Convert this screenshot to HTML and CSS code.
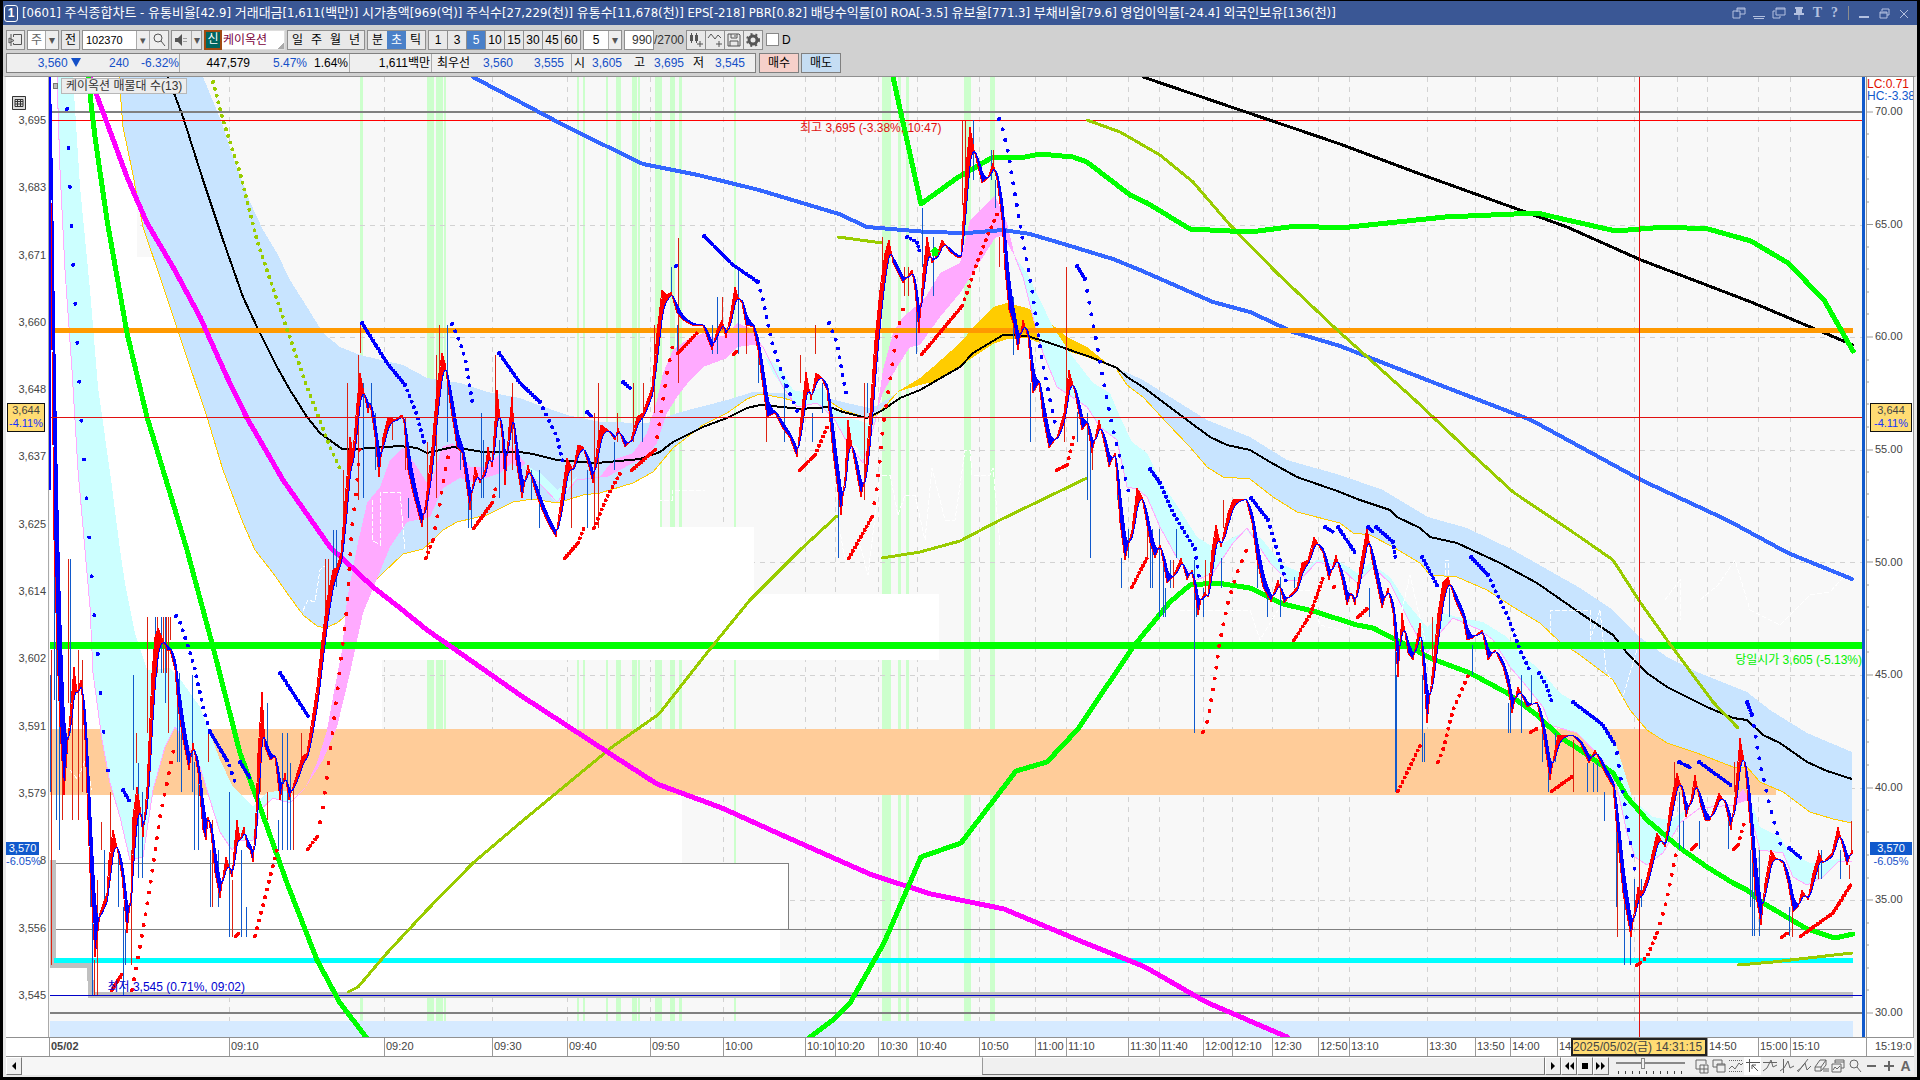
FILE: index.html
```html
<!DOCTYPE html>
<html lang="ko">
<head>
<meta charset="utf-8">
<title>[0601] 주식종합차트</title>
<link rel="stylesheet" href="styles.css">
</head>
<body>
<main class="window">
  <header class="titlebar">
    <span class="badge">1</span>
    <h1>[0601] 주식종합차트 - 유통비율[42.9] 거래대금[1,611(백만)] 시가총액[969(억)] 주식수[27,229(천)] 유통수[11,678(천)] EPS[-218] PBR[0.82] 배당수익률[0] ROA[-3.5] 유보율[771.3] 부채비율[79.6] 영업이익률[-24.4] 외국인보유[136(천)]</h1>
    <div class="win-tools">
      <button aria-label="창 연결"><svg viewBox="0 0 14 14"><path d="M5 6V2h8v6H8M1 5h7v7H1zM5 3h8"/></svg></button>
      <button aria-label="접기"><svg viewBox="0 0 14 14"><path d="M1 10.500h12M2 12.500h10"/></svg></button>
      <button aria-label="새 창"><svg viewBox="0 0 14 14"><path d="M4 2h9v7H4zM4 3h9M3 5H1v7h7v-2"/></svg></button>
      <button aria-label="고정"><svg viewBox="0 0 14 14"><path class="solid" d="M3 1h8v2h-1v4h2v2H2V7h2V3H3z"/><path d="M7 9v5"/></svg></button>
      <button class="serif" aria-label="글꼴">T</button>
      <button class="serif" aria-label="도움말">?</button>
      <i></i>
      <button aria-label="최소화"><svg viewBox="0 0 14 14"><path class="solid" d="M2 10h10v2H2z"/></svg></button>
      <button aria-label="이전 크기"><svg viewBox="0 0 14 14"><path d="M5 5V3h7v6h-2M3 6h7v6H3zM3 7h7"/></svg></button>
      <button aria-label="닫기"><svg viewBox="0 0 14 14"><path d="M3 4l8 8M11 4l-8 8"/></svg></button>
    </div>
  </header>

  <div class="toolbar">
    <div class="group"><button class="sq" aria-label="목록"><svg viewBox="0 0 16 16"><path d="M5.500 5V2.500h8v10h-8V11M1 6l5 2.500L1 11zM3 2v12"/></svg></button></div>
    <div class="combo narrow"><span>주</span><button aria-label="종류">▾</button></div>
    <div class="group"><button class="sq">전</button></div>
    <div class="combo code"><input type="text" value="102370" aria-label="종목코드"><button aria-label="최근 종목">▾</button><button class="sq" aria-label="검색"><svg viewBox="0 0 16 16"><circle cx="7" cy="6" r="4"/><path d="M10 9l4 5"/></svg></button></div>
    <div class="group"><button class="sq" aria-label="소리"><svg viewBox="0 0 16 16"><path class="solid" d="M1 6h3l4-4v12L4 10H1z"/><path d="M10 6v1M10 9v1M12 6v1M12 9v1"/></svg></button><button class="drop" aria-label="소리 메뉴">▾</button></div>
    <div class="stock"><b>신</b><span>케이옥션</span></div>
    <div class="group"><button class="sq">일</button><button class="sq">주</button><button class="sq">월</button><button class="sq">년</button></div>
    <div class="group"><button class="sq">분</button><button class="sq on">초</button><button class="sq">틱</button></div>
    <div class="group split"><button class="sq">1</button><button class="sq">3</button><button class="sq on">5</button><button class="sq">10</button><button class="sq">15</button><button class="sq">30</button><button class="sq">45</button><button class="sq">60</button></div>
    <div class="combo step"><span>5</span><button aria-label="간격">▾</button></div>
    <div class="count"><input type="text" value="990" aria-label="표시 개수"><span>/2700</span></div>
    <div class="group split"><button class="sq" aria-label="봉 추가"><svg viewBox="0 0 16 16"><path class="solid" d="M2 3h3v6H2zM7 3h3v6H7z"/><path d="M3.500 1v10M8.500 1v10M9 12h6M12 9v6"/></svg></button><button class="sq" aria-label="지표 추가"><svg viewBox="0 0 16 16"><path d="M1 6l3-4 4 5 3-4 3 3M9 12h6M12 9v6"/></svg></button><button class="sq" aria-label="저장"><svg viewBox="0 0 16 16"><path d="M2 2h11l1 1v11H2zM5 2v4h6V2M4 14V9h8v5M9 3v2"/></svg></button><button class="sq" aria-label="설정"><svg viewBox="0 0 16 16"><circle class="gear" cx="8" cy="8" r="4"/><circle class="teeth" cx="8" cy="8" r="6"/></svg></button></div>
    <label class="check"><input type="checkbox">D</label>
  </div>

  <div class="quote">
    <dl class="cells">
      <div class="c1"><dd class="dn">3,560 <svg class="fall" viewBox="0 0 10 9"><path d="M0 0h10L5 9z"/></svg></dd><dd class="dn">240</dd><dd class="dn">-6.32%</dd></div>
      <div class="c2"><dd>447,579</dd><dd class="dn">5.47%</dd><dd>1.64%</dd></div>
      <div class="c3"><dd>1,611백만</dd></div>
      <div class="c4"><dt>최우선</dt><dd class="dn">3,560</dd><dd class="dn">3,555</dd></div>
      <div class="c5"><dt>시</dt><dd class="dn">3,605</dd><dt>고</dt><dd class="dn">3,695</dd><dt>저</dt><dd class="dn">3,545</dd></div>
    </dl>
    <button class="buy">매수</button><button class="sell">매도</button>
  </div>

  <section class="chart">
    <div class="axis left">
      <ol><li>3,695</li><li>3,683</li><li>3,671</li><li>3,660</li><li>3,648</li><li>3,637</li><li>3,625</li><li>3,614</li><li>3,602</li><li>3,591</li><li>3,579</li><li>8</li><li>3,556</li><li>3,545</li></ol>
      <button class="grid-btn" aria-label="표 보기"><svg viewBox="0 0 14 14"><path d="M.5.5h13v13H.5zM3 3.500h8v7H3zM3 5.500h8M3 8h8M5.500 3v8M8.500 3v8"/></svg></button>
      <p class="tag cross">3,644<br><span>-4.11%</span></p>
      <p class="tag now"><b>3,570</b><br>-6.05%</p>
    </div>

    <div class="plot">
      <svg viewBox="49 77 1817 960" preserveAspectRatio="none" role="img" aria-label="케이옥션 5초 차트">
        <g class="stripes"><path d="M361 77V1037M680 77V1037M899 77V1037M907 77V1037" stroke-width="3"/><path d="M430 77V1037M439 77V1037M658 77V1037M967 77V1037" stroke-width="7"/><path d="M445 77V1037M578 77V1037M584 77V1037M735 77V1037M639 77V1037M607 77V1037" stroke-width="2"/><path d="M618 77V1037M634 77V1037M672 77V1037M992 77V1037" stroke-width="5"/><path d="M886 77V1037" stroke-width="9"/></g>
        <path class="grid" d="M229.500 77V1037M384.500 77V1037M492.500 77V1037M567.500 77V1037M650.500 77V1037M723.500 77V1037M805.500 77V1037M835.500 77V1037M878.500 77V1037M917.500 77V1037M979.500 77V1037M1035.500 77V1037M1066.500 77V1037M1128.500 77V1037M1159.500 77V1037M1203.500 77V1037M1232.500 77V1037M1272.500 77V1037M1318.500 77V1037M1349.500 77V1037M1427.500 77V1037M1475.500 77V1037M1510.500 77V1037M1557.500 77V1037M1597.500 77V1037M1634.500 77V1037M1677.500 77V1037M1707.500 77V1037M1758.500 77V1037M1790.500 77V1037M50 225.500H1862M50 337.500H1862M50 450.500H1862M50 562.500H1862M50 675.500H1862M50 788.500H1862M50 900.500H1862"/>
        <path class="white" d="M50 77H125L137 190V257H200L300 460H660V527H754V594H939V660H382V729H682V863H788V928H780V995H50z"/>
        <path class="orange-zone" d="M50 729H1776V795H50z"/>
        <path class="floor" d="M50 1021H1853V1037H50z"/>

        <path class="sky" d="M119 77H203L222 123 233 157 250 202 263 230 277 253 290 280 307 307 323 333 340 347 360 355 403 365 427 378 460 383 487 392 520 398 533 403 567 415 600 422 647 423 677 413 727 400 753 392 783 393 807 402 827 398 847 403 870 408 878 405 897 393 877 415 867 418 843 410 827 400 800 403 783 398 760 394 747 399 727 413 703 425 673 448 653 472 633 483 600 493 583 495 557 503 533 499 513 502 487 515 457 522 443 530 433 540 423 549 403 554 383 573 363 593 350 612 337 623 325 628 317 626 303 615 287 593 273 573 255 550 243 523 223 470 207 417 180 337 160 277 143 227 132 170 123 127z"/>
        <path class="sky" d="M1117 368L1143 380 1167 395 1207 420 1250 437 1287 460 1340 475 1383 490 1428 517 1467 528 1513 550 1580 588 1613 610 1637 635 1667 657 1697 672 1747 692 1770 710 1807 733 1852 752V823L1833 819 1810 812 1783 792 1760 782 1747 767 1733 767 1697 753 1667 743 1647 730 1630 710 1613 680 1580 655 1560 642 1540 623 1513 607 1487 590 1457 577 1430 575 1420 563 1393 547 1370 535 1353 533 1340 523 1297 512 1273 497 1250 479 1223 477 1207 467 1190 447 1167 423 1143 397 1127 385z"/>
        <path class="gold" d="M897 392L920 378 933 367 960 343 980 320 993 307 1007 303 1027 308 1043 317 1067 337 1087 347 1107 363 1117 369 1087 357 1043 344 1027 338 1007 339 993 344 960 366 933 382 920 385z"/>
        <path class="goldline" d="M119 77L123 127 132 170 143 227 160 277 180 337 207 417 223 470 243 523 255 550 273 573 287 593 303 615 317 626 325 628 337 623 350 612 363 593 383 573 403 554 423 549 433 540 443 530 457 522 487 515 513 502 533 499 557 503 583 495 600 493 633 483 653 472 673 448 703 425 727 413 747 399 760 394 783 398 800 403 827 400 843 410 867 418 877 415 897 393M1117 370L1127 385 1143 397 1167 423 1190 447 1207 467 1223 477 1250 479 1273 497 1297 512 1340 523 1353 533 1370 535 1393 547 1420 563 1430 575 1457 577 1487 590 1513 607 1540 623 1560 642 1580 655 1613 680 1630 710 1647 730 1667 743 1697 753 1733 767 1747 767 1760 782 1783 792 1810 812 1833 819 1852 823"/>

        <path class="aqua" d="M57 77H73L80 187 90 290 98 387 112 487 120 550 125 583 135 633 147 670 170 668 183 683 200 707 220 760 233 787 253 807 267 792 293 790 290 803 273 798 260 810 253 840 240 840 232 850 220 832 210 800 200 767 187 743 175 727 165 747 153 790 143 857 130 860 120 817 110 783 102 740 93 673 90 607 85 550 78 470 72 370 65 270 60 170z"/>
        <path class="aqua" d="M525 465L540 473 557 490 577 477 560 502 555 502 543 487zM765 357L780 367 793 390 807 393 823 387 833 407 847 417 867 423 877 415 863 463 857 447 847 442 833 417 817 403 797 407 783 387 773 373z"/>
        <path class="aqua" d="M1015 257L1027 273 1040 300 1053 327 1073 357 1093 383 1110 393 1120 417 1132 442 1147 453 1160 480 1180 510 1197 537 1213 547 1223 543 1247 530 1260 537 1283 565 1300 572 1317 560 1337 560 1357 573 1370 563 1390 577 1407 603 1427 627 1443 613 1457 617 1483 622 1507 637 1520 653 1540 670 1560 693 1580 705 1600 720 1617 747 1633 800 1653 817 1670 820 1690 808 1680 823 1663 853 1647 865 1635 857 1627 833 1617 787 1603 760 1577 733 1550 725 1543 707 1523 682 1510 667 1493 640 1480 630 1453 618 1440 633 1427 653 1410 623 1390 583 1373 567 1357 583 1340 567 1317 562 1300 580 1287 580 1270 563 1247 530 1233 543 1213 573 1197 580 1177 558 1160 527 1147 497 1137 489 1127 487 1117 440 1100 427 1087 407 1057 387 1043 353 1033 317 1023 277z"/>
        <path class="aqua" d="M1747 790L1760 827 1780 837 1790 853 1810 863 1833 860 1852 857 1838 862 1823 877 1807 885 1793 877 1783 853 1760 850 1750 813z"/>
        <path class="pinkline" d="M57 77L60 170 65 270 72 370 78 470 85 550 90 607 93 673 102 740 110 783 120 817 130 860 143 857 153 790 165 747 175 727 187 743 200 767 210 800 220 832 232 850 240 840 253 840 260 810 273 798 290 803 305 788M525 469L543 487 557 502 577 480 600 477M763 347L783 387 797 407 817 403 833 417 847 442 863 463 877 415M1015 257L1023 277 1033 317 1043 353 1057 387 1087 407 1100 427 1117 440 1127 487 1137 489 1147 497 1160 527 1177 558 1197 580 1213 573 1233 543 1247 528 1270 563 1287 580 1300 580 1317 562 1340 567 1357 583 1373 567 1390 583 1410 623 1427 653 1440 633 1453 618 1480 630 1493 640 1510 667 1523 682 1543 707 1550 725 1577 733 1603 760 1617 787 1627 833 1635 857 1647 865 1663 853 1680 823 1700 808 1733 805M1750 813L1760 850 1783 853 1793 877 1807 885 1823 877 1838 862 1852 861"/>
        <path class="pink" d="M305 788L317 763 327 730 333 697 342 650 347 600 357 547 367 503 380 487 390 460 403 447 417 467 427 483 433 477 442 447 453 443 470 467 487 467 500 453 512 447 525 463 520 470 512 463 500 473 473 482 460 478 443 488 430 517 407 522 390 547 363 613 350 673 337 727 323 760z"/>
        <path class="pink" d="M600 477L613 460 633 453 647 433 657 400 663 373 673 350 687 340 703 333 713 337 727 335 737 323 750 328 763 347 753 345 737 347 727 358 703 367 690 380 677 397 667 413 657 443 647 457 633 463 607 477zM877 410L883 370 893 333 903 317 915 307 927 295 940 273 960 263 970 220 983 207 995 195 1007 223 1015 257 1003 235 995 238 983 257 960 293 940 317 920 345 910 347 897 367 883 393zM1733 805L1743 788 1749 800z"/>
        <path class="median" d="M168 77L183 117 203 180 223 240 243 297 257 327 277 367 290 390 307 417 320 433 342 449 357 449 400 446 417 448 427 453 453 447 483 452 520 452 533 454 557 460 597 463 640 459 660 452 673 442 703 427 727 418 747 408 760 405 783 407 800 409 830 407 843 412 867 418 883 410 900 398 920 390 960 367 973 353 1003 335 1027 336 1047 342 1067 349 1093 358 1117 368 1127 377 1143 387 1167 405 1187 420 1210 437 1227 445 1250 450 1270 462 1297 477 1340 492 1357 499 1390 510 1397 517 1420 528 1430 537 1457 543 1500 563 1537 583 1580 613 1613 635 1627 653 1647 673 1667 687 1707 707 1733 718 1747 720 1763 735 1780 743 1807 762 1827 771 1852 779"/>

        <path class="ghost" d="M300 617L308 600 315 602 320 570 326 565M372 500V540L380 545V492H400L405 550M650 500H672V490H705M838 520L845 560 860 545 868 575 880 475H890L898 515 905 495H915L925 540 932 468 945 520H955L965 450H970L972 475H990L993 468 1000 545M1180 610H1250L1260 640 1290 590H1310L1320 625 1340 630M1395 600V640L1410 575 1425 640M1437 588H1445V560H1448V590M1550 640V610H1590V640L1600 610 1606 670 1622 700 1640 640M1665 600L1680 580V620M1700 600L1718 585 1735 560 1750 610 1780 625 1810 595 1830 592 1850 570M70 770L78 780 85 760 92 790"/>

        <path class="range-box" d="M50 863.500H788.500V929.500H1852M50 929.500H788"/>
        <path class="rule" d="M50 112H1862M50 1013H1862"/>
        <path class="base" d="M53 860V965H90L91 995H1853"/>
        <path class="baseline" d="M50 995.500H1862"/>
        <path class="high" d="M50 120.500H1862"/>
        <path class="ma black" d="M1143 77L1240 110 1340 144 1420 174 1567 227 1641 260 1751 302 1853 345"/>
        <path class="ma blue" d="M473 77L569 128 643 164 698 175 759 190 839 214 867 227 927 232 967 233 1003 230 1030 234 1067 245 1113 259 1140 270 1213 302 1250 312 1293 332 1340 346 1445 387 1531 420 1641 480 1727 520 1788 553 1852 579"/>
        <path class="level amber" d="M50 330.500H1853"/>
        <path class="level lime" d="M50 645.500H1862"/>
        <path class="level cyan" d="M54 960.500H1853"/>
        <path class="ma olive" d="M348 992L358 987 387 953 427 910 473 863 520 823 612 747 659 714 710 649 750 600 800 550 837 516M838 237L882 243M882 558L920 552 960 541 1000 520 1087 478M1087 120L1120 132 1160 155 1193 182 1230 225 1277 273 1335 328 1415 400 1473 455 1513 492 1580 537 1613 560 1640 602 1667 640 1713 702 1738 728M1738 965L1773 962 1852 953"/>
        <path class="ma olive dots" d="M213 82L223 120 240 173 257 240 277 300 307 387 330 447 342 473"/>
        <path class="ma magenta" d="M90 77L107 123 127 177 147 223 173 267 200 317 227 377 247 418 283 480 330 547 373 587 400 608 427 630 453 648 520 695 612 755 657 784 722 808 784 836 872 875 931 894 1004 909 1078 940 1145 967 1206 1002 1287 1037"/>
        <path class="ma green" d="M88 77L95 137 107 220 127 333 147 417 170 493 187 550 213 647 240 753 260 807 287 883 317 960 340 1003 353 1020 366 1037M810 1037L833 1020 850 1003 884 943 921 857 961 843 1016 771 1047 762 1078 729 1133 647 1170 602 1190 585 1217 583 1250 588 1283 604 1313 611 1357 625 1373 628 1410 647 1430 658 1470 673 1507 693 1537 715 1560 737 1580 750 1613 773 1627 797 1647 820 1680 848 1707 867 1733 883 1747 890 1763 903 1807 929 1835 938 1853 934M893 77L921 204 957 178 993 157 1020 158 1040 154 1073 157 1087 162 1130 195 1147 203 1190 229 1250 232 1297 226 1340 228 1445 217 1537 213 1567 220 1616 231 1665 227 1708 229 1751 241 1788 263 1824 300 1853 351"/>

        <g id="price"></g>
        <g id="sar"></g>
        <path class="arrow" d="M935 246l5 6h-2v4h-6v-4h-2zM919 202l9-2-7 6z"/>
        <path class="cross-line" d="M50 417.500H1862M1639.500 77V1037"/>
        <path class="left-edge" d="M50 77V490"/>
        <path class="right-edge" d="M1863.500 77V1037"/>
      </svg>
      <p class="legend"><i></i><span>케이옥션 매물대 수(13)</span></p>
      <p class="note top">최고 3,695 (-3.38%, 10:47)</p>
      <p class="note low">최저 3,545 (0.71%, 09:02)</p>
      <p class="note open">당일시가 3,605 (-5.13%)</p>
    </div>

    <div class="axis right">
      <svg class="ticks" viewBox="0 77 6 960" preserveAspectRatio="none"><path d="M0 112H6M0 224.500H6M0 337H6M0 450H6M0 562H6M0 675H6M0 788H6M0 900H6M0 1013H6"/><path d="M0 134H2M0 157H2M0 179H2M0 202H2M0 247H2M0 269H2M0 292H2M0 314H2M0 360H2M0 382H2M0 404H2M0 427H2M0 472H2M0 494H2M0 517H2M0 540H2M0 585H2M0 607H2M0 630H2M0 652H2M0 698H2M0 720H2M0 742H2M0 765H2M0 810H2M0 832H2M0 855H2M0 878H2M0 923H2M0 945H2M0 968H2M0 990H2"/></svg>
      <ol><li>70.00</li><li>65.00</li><li>60.00</li><li>55.00</li><li>50.00</li><li>45.00</li><li>40.00</li><li>35.00</li><li>30.00</li></ol>
      <p class="lchc"><span>LC:0.71</span><br>HC:-3.38</p>
      <p class="tag cross">3,644<br><span>-4.11%</span></p>
      <p class="tag now"><b>3,570</b><br>-6.05%</p>
    </div>

    <div class="times">
      <span></span><b>05/02</b><span>09:10</span><span>09:20</span><span>09:30</span><span>09:40</span><span>09:50</span><span>10:00</span><span>10:10</span><span>10:20</span><span>10:30</span><span>10:40</span><span>10:50</span><span>11:00</span><span>11:10</span><span>11:30</span><span>11:40</span><span>12:00</span><span>12:10</span><span>12:30</span><span>12:50</span><span>13:10</span><span>13:30</span><span>13:50</span><span>14:00</span><span>14</span><mark>2025/05/02(금) 14:31:15</mark><span>14:50</span><span>15:00</span><span>15:10</span><span class="end">15:19:0</span>
    </div>
  </section>

  <footer class="bottom">
    <button class="raised" aria-label="왼쪽"><svg viewBox="0 0 12 12"><path d="M8 2v8L4 6z"/></svg></button>
    <div class="track"><div class="thumb"></div></div>
    <button class="raised" aria-label="오른쪽"><svg viewBox="0 0 12 12"><path d="M4 2v8l4-4z"/></svg></button>
    <button class="raised" aria-label="뒤로"><svg viewBox="0 0 12 12"><path d="M6 2v8L2 6zM11 2v8L7 6z"/></svg></button>
    <button class="raised" aria-label="정지"><svg viewBox="0 0 12 12"><path d="M3 3h6v6H3z"/></svg></button>
    <button class="raised" aria-label="앞으로"><svg viewBox="0 0 12 12"><path d="M1 2v8l4-4zM6 2v8l4-4z"/></svg></button>
    <input type="range" min="0" max="100" value="38" aria-label="재생 속도">
    <div class="tools">
      <button aria-label="분할"><svg viewBox="0 0 16 16"><path d="M6 11H2V2h10v4M6 7h8v8H6zM10 7v8M6 11h8"/></svg></button>
      <button aria-label="겹침"><svg viewBox="0 0 16 16"><path d="M6 9H2V2h9v4M6 6h8v8H6zM6 7h8"/></svg></button>
      <button aria-label="영역"><svg viewBox="0 0 16 16"><path stroke-dasharray="1 1" d="M1 2.500h14M1 13.500h14"/><path d="M1 11l3-3 3 3 4-6 2 2 2-2"/></svg></button>
      <button class="on" aria-label="커서"><svg viewBox="0 0 16 16"><path d="M1 4.500h14M4.500 1v13M13 13L7 7M7 11V7h4"/></svg></button>
      <button aria-label="수평선"><svg viewBox="0 0 16 16"><path d="M1 4.500h14M1 13l4-3 4-8 2 7 4-2"/></svg></button>
      <button aria-label="수직선"><svg viewBox="0 0 16 16"><path d="M4.500 1v14M1 13l4-3 4-7 2 7 4-2"/></svg></button>
      <button aria-label="추세선"><svg viewBox="0 0 16 16"><path d="M2 14L12 1M1 13l4-3 4-5 2 7 4-4"/></svg></button>
      <button aria-label="모두 지우기"><svg viewBox="0 0 16 16"><path d="M2 9l5-7h6l-5 7zM2 9v4h6V9M8 13l5-6V2M11 10v4M13 10v4M15 10v4"/></svg></button>
      <button aria-label="차트 복사"><svg viewBox="0 0 16 16"><path d="M5 5V2h9v8h-3M2 6h9v8H2zM3 12l2-3 2 2 3-3M5 4h9"/></svg></button>
      <button aria-label="돋보기"><svg viewBox="0 0 16 16"><circle cx="7" cy="6" r="4"/><path d="M10 9l4 5"/></svg></button>
      <button class="bold" aria-label="축소"><svg viewBox="0 0 16 16"><path d="M3 8h9"/></svg></button>
      <button class="bold" aria-label="확대"><svg viewBox="0 0 16 16"><path d="M3 8h10M8 3v10"/></svg></button>
      <button class="letter" aria-label="글자">A</button>
    </div>
  </footer>
</main>
<script src="chart.js"></script>
</body>
</html>
```
FILE: styles.css
```css
* { box-sizing: border-box; }
html, body { height: 100%; }
body { margin: 0; background: #000; font: 12px/14px "Liberation Sans", "Noto Sans CJK KR", sans-serif; color: #000; overflow: hidden; }
h1, p, ol, dl, dd, dt { margin: 0; padding: 0; font: inherit; }
ol { list-style: none; }
button { font: inherit; color: inherit; margin: 0; padding: 0; border: 0; background: none; display: flex; align-items: center; justify-content: center; }
input { font: inherit; color: inherit; }
svg { display: block; fill: none; stroke: currentColor; }

.window { height: 100%; padding: 1px 3px 3px 3px; display: flex; flex-direction: column; }

.titlebar { height: 24px; flex: none; background: #3a5795; color: #fff; display: flex; align-items: center; gap: 4px; padding: 0 6px 0 1px; white-space: nowrap; }
.badge { width: 14px; height: 17px; border: 1px solid #fff; border-radius: 3px; text-align: center; font-weight: bold; }
.titlebar h1 { flex: 1; min-width: 0; overflow: hidden; font: 13px/18px "DejaVu Sans Condensed", "Liberation Sans", "Noto Sans CJK KR", sans-serif; }
.win-tools { display: flex; align-items: center; gap: 6px; color: #b4c1e0; }
.win-tools svg { width: 14px; height: 14px; }
.win-tools i { width: 1px; height: 14px; margin: 0 2px; background: #8d8d8d; }
.win-tools .serif { width: 11px; font: bold 14px/14px "Liberation Serif", serif; }
.solid { fill: currentColor; stroke: none; }

.toolbar { height: 27px; flex: none; background: #d1d1d1; display: flex; align-items: center; gap: 2px; padding: 2px 3px 0 3px; }
.group, .combo, .stock { height: 20px; display: flex; border: 1px solid #8f8f8f; background: #e9e9e9; flex: none; }
.group .sq { width: 19px; }
.group:first-child .sq, .group > .sq:only-child { width: 17px; }
.split .sq { width: 18px; }
.split .sq + .sq { width: 19px; border-left: 1px solid #8f8f8f; }
.toolbar svg { width: 16px; height: 16px; color: #555; }
.on { background: #4a80c8; color: #fff; }
.combo { background: #fff; }
.combo > span { flex: 1; text-align: center; line-height: 18px; }
.combo button { width: 13px; background: #eee; border-left: 1px solid #aaa; color: #555; }
.combo.narrow { width: 32px; color: #666; }
.combo.code { width: 87px; font-size: 11px; }
.combo.code input { flex: 1; min-width: 0; border: 0; padding: 0 3px; background: none; }
.combo.code .sq { width: 19px; }
.combo.step { width: 39px; }
.drop { width: 10px; border-left: 1px solid #aaa; color: #555; }
.stock { width: 81px; background: linear-gradient(135deg, #fff 93%, #aaa 93%); border-color: #ddd; color: #7a003c; }
.stock b { width: 18px; height: 20px; margin: -1px 1px 0 -1px; background: #00665f; border: 2px solid #a04a10; color: #fff; font-weight: normal; line-height: 15px; text-align: center; }
.stock span { line-height: 18px; }
.count { display: flex; align-items: center; color: #333; }
.count input { width: 30px; height: 20px; border: 1px solid #8f8f8f; padding: 0 1px; text-align: right; }
.gear { stroke-width: 3; }
.teeth { stroke-width: 2; stroke-dasharray: 2 3; }
.check { display: flex; align-items: center; gap: 3px; padding-left: 1px; }
.check input { appearance: none; width: 13px; height: 13px; margin: 0; background: #fff; border: 1px solid #888; }

.quote { height: 24px; flex: none; background: #d1d1d1; display: flex; align-items: flex-start; gap: 2px; padding: 1px 3px 0 3px; white-space: nowrap; }
.cells { display: flex; height: 20px; border: 1px solid #808080; background: #efefef; line-height: 18px; margin-right: 1px; }
.cells > div { display: grid; text-align: right; border-right: 1px solid #aaa; }
.cells > div:last-child { border: 0; }
.cells .c1 { grid-template-columns: 74px 48px 50px; width: 173px; }
.cells .c2 { grid-template-columns: 70px 57px 41px; width: 170px; }
.cells .c3 { grid-template-columns: 80px; width: 82px; }
.cells .c4 { grid-template-columns: 38px 43px 51px; width: 140px; }
.cells .c5 { grid-template-columns: 13px 37px 23px 39px 20px 41px; width: 183px; }
.fall { display: inline-block; width: 10px; height: 9px; fill: currentColor; stroke: none; }
.dn { color: #1450c8; }
.buy, .sell { width: 40px; height: 20px; border: 1px solid #808080; background: #f6d0ca; }
.sell { background: #c5ddf3; }

.chart { flex: 1; min-height: 0; border: solid #e8e8e8; border-width: 0 3px 0 3px; display: grid; grid-template-columns: 43px 1fr 48px; grid-template-rows: 1fr 20px; border-top: 1px solid #909090; background: #fff; }
.axis { position: relative; color: #444; font-size: 11px; line-height: 12px; overflow: hidden; border-right: 1px solid #999; }
.axis ol { height: 100%; display: flex; flex-direction: column; justify-content: space-between; }
.left { border-right: 1px solid #aaa; }
.left ol { padding: 37px 2px 36px 0; text-align: right; }
.right ol { padding: 28px 0 19px 8px; }
.right { border-left: 1px solid #999; }
.ticks { position: absolute; left: 0; top: 0; width: 6px; height: 100%; color: #999; }
.grid-btn { position: absolute; left: 6px; top: 19px; color: #333; background: #ddd; }
.grid-btn svg { width: 14px; height: 14px; }
.tag { position: absolute; left: 1px; text-align: center; width: 38px; line-height: 13px; }
.right .tag { left: 3px; width: 42px; }
.tag.cross { top: 34%; height: 29px; border: 1px solid #111; background: #ffdc73; }
.tag.cross span { color: #1432ff; }
.tag.now { top: 80%; margin-top: -3px; color: #1450c8; background: #fff; }
.tag.now b { display: inline-block; width: 100%; background: #1059cc; color: #fff; font-weight: normal; }
.left .tag.now { left: 0; width: 33px; }
.lchc { position: absolute; left: 0; top: 1px; font-size: 12px; color: #1059cc; white-space: nowrap; }
.lchc span { color: #e01000; }

.plot { position: relative; background: #f8f8f8; min-height: 0; min-width: 0; overflow: hidden; }
.plot > svg { position: absolute; width: 100%; height: 100%; stroke: none; shape-rendering: crispEdges; }
.stripes { stroke: #ccffcc; }
.grid { stroke: #d2d2d2; stroke-dasharray: 5 5; }
.white { fill: #fff; }
.orange-zone { fill: #ffcc99; }
.floor { fill: #d6eaff; }
.sky { fill: #c8e4ff; }
.gold { fill: #ffcc00; }
.goldline { stroke: #ffcc00; }
.aqua { fill: #ccffff; }
.pink { fill: #ffaaff; }
.pinkline { stroke: #ffaaff; }
.ghost { stroke: #fff; stroke-dasharray: 5 2; }
.median { stroke: #000; stroke-width: 2; }
.range-box { stroke: #808080; }
.rule { stroke: #808080; stroke-width: 2; }
.base { stroke: #c0c0c0; stroke-width: 6; }
.baseline { stroke: #0000c8; }
.high { stroke: #ff0000; }
.cross-line { stroke: #e01010; }
.left-edge { stroke: #0000ff; stroke-width: 2; }
.right-edge { stroke: #1059cc; stroke-width: 3; }
.level { stroke-width: 5; }
.amber { stroke: #ff9900; }
.level.lime { stroke: #00ff00; stroke-width: 7; }
.cyan { stroke: #00ffff; }
.ma { stroke-width: 3; stroke-linejoin: round; stroke-linecap: round; }
.ma.black { stroke: #000; }
.ma.blue { stroke: #3366ff; stroke-width: 4; }
.olive { stroke: #99cc00; }
.dots { stroke-width: 4; stroke-dasharray: 0 7; }
.magenta { stroke: #ff00ff; stroke-width: 5; }
.ma.green { stroke: #00ff00; stroke-width: 5; }
.arrow { fill: #00ff00; }
.up-fill { fill: #ff0000; }
.down-fill { fill: #0000ff; }
.fast { stroke: #ff0000; }
.slow { stroke: #0000ff; }
.wick-up { stroke: #dd2211; }
.wick-down { stroke: #1059cc; }
.sar-up, .sar-down { stroke-width: 4; stroke-linecap: round; stroke: #ff0000; }
.sar-down { stroke: #0000ff; }
.note { position: absolute; white-space: nowrap; line-height: 14px; }
.top { left: 41%; top: 4%; margin: 6px 0 0 6px; color: #e01010; }
.low { left: 3%; top: 94%; margin: 1px 0 0 4px; color: #0000d0; }
.open { right: 4px; top: 60%; color: #00f000; }
.legend { position: absolute; left: 4px; top: 1px; display: flex; align-items: center; gap: 3px; color: #333; white-space: nowrap; }
.legend i { width: 5px; height: 6px; border: 1px solid #777; background: #bbb; }
.legend span { padding: 0 4px; background: #ededed; border: 1px solid #b8b8b8; }

.times { grid-column: 1 / -1; display: grid; grid-template-columns: 43fr 180fr 155fr 108fr 75fr 83fr 73fr 82fr 30fr 43fr 39fr 62fr 56fr 31fr 62fr 31fr 44fr 29fr 40fr 46fr 31fr 78fr 48fr 35fr 47fr 14fr 136fr 51fr 32fr 76fr 48fr; border-top: 1px solid #909090; border-bottom: 1px solid #909090; color: #444; font-size: 11px; line-height: 17px; }
.times > * { min-width: 0; border-left: 1px solid #999; padding-left: 1px; white-space: nowrap; overflow: hidden; }
.times > :first-child { border: 0; }
.times mark { border: 2px solid #222; background: #ffdc73; color: #444; line-height: 14px; font-size: 12px; padding: 0; }
.times .end { padding-left: 8px; }

.bottom { height: 20px; flex: none; background: #efefef; border: solid #e8e8e8; border-width: 0 3px 2px; display: flex; align-items: stretch; }
.raised { width: 16px; border: 1px solid; border-color: #fff #777 #777 #fff; background: #efefef; }
.raised svg { width: 12px; height: 12px; fill: #000; stroke: none; }
.track { flex: 1; background: #f6f6f6; display: flex; justify-content: flex-end; }
.thumb { width: 37%; border: 1px solid; border-color: #fff #777 #777 #999; background: #f0f0f0; }
.bottom input { appearance: none; width: 69px; margin: 0 8px 0 7px; background: linear-gradient(#888, #888) 0 5px / 100% 2px no-repeat, repeating-linear-gradient(90deg, #444 0 1px, transparent 1px 7px) 2px 14px / 66px 3px no-repeat; }
.bottom input::-webkit-slider-thumb { appearance: none; width: 4px; height: 11px; margin-top: -6px; border: 1px solid #888; background: #f2f2f2; }
.tools { display: flex; color: #666; }
.tools button { width: 17px; }
.tools .on { background: #fff; color: #555; }
.tools svg { width: 16px; height: 16px; }
.tools .bold svg { stroke-width: 2; }
.tools .letter { font-weight: bold; font-size: 14px; }
```
FILE: chart.js
```js
// Fast price line; the slow line is its exponential average.
const price = `50,77 51,200 52,350 54,540 57,650 60,727 64,795 68,740 74,667 77,693 81,680 85,740 90,873 95,957 97,940 100,913 107,893 109,860 113,830 117,847 122,877 127,933 131,893 133,817 137,787 140,807 143,837 147,787 152,673 155,637 158,628 163,640 167,650 170,650 175,670 178,707 183,740 189,770 193,743 198,773 203,830 206,840 208,817 211,833 215,873 220,898 223,877 226,857 232,877 235,840 237,820 240,840 244,827 247,847 250,850 253,862 256,813 258,753 262,692 265,747 270,760 275,757 280,800 285,773 289,800 295,780 302,757 307,753 312,720 317,687 322,640 327,600 333,570 337,567 341,553 350,437 353,453 357,403 360,373 364,393 368,413 370,403 375,437 379,477 383,437 388,417 395,420 402,415 404,423 408,470 413,493 422,527 426,500 432,447 437,387 442,353 445,363 450,403 457,447 462,453 470,510 475,467 480,483 485,470 488,447 492,467 497,390 502,437 505,485 509,427 512,397 516,460 522,498 528,465 535,490 542,510 550,527 556,537 560,507 567,458 573,470 578,445 583,447 589,467 593,483 598,440 601,425 608,430 615,440 618,428 625,447 631,440 637,417 643,413 652,387 657,333 662,290 667,295 671,292 677,313 683,320 692,325 703,325 707,337 712,350 717,330 722,320 726,338 730,317 735,287 738,297 742,303 746,325 753,327 758,350 762,380 767,417 775,413 782,427 790,438 797,457 801,417 806,372 811,400 816,373 821,377 827,390 833,453 841,515 845,477 848,420 853,453 861,497 865,477 870,413 875,340 880,290 885,253 889,240 893,263 903,283 912,270 915,290 919,333 923,273 927,237 932,263 937,255 942,240 950,252 957,257 961,257 964,203 967,157 970,127 974,150 982,183 988,178 993,163 997,180 1002,220 1005,270 1009,310 1013,323 1018,350 1023,320 1028,337 1033,393 1039,383 1043,417 1049,448 1057,437 1064,413 1069,370 1075,393 1082,430 1087,423 1092,453 1099,420 1105,447 1109,467 1115,453 1120,523 1125,560 1132,530 1137,488 1142,497 1150,543 1155,558 1160,545 1167,583 1173,577 1181,558 1187,580 1192,570 1198,615 1201,600 1205,592 1208,597 1212,550 1216,525 1221,547 1228,513 1233,500 1246,499 1252,523 1257,560 1263,587 1271,602 1278,580 1284,603 1297,587 1302,563 1308,560 1314,537 1323,553 1329,580 1336,555 1342,580 1347,605 1351,593 1355,605 1360,567 1367,528 1372,560 1382,608 1388,588 1393,613 1398,677 1402,613 1408,653 1413,660 1420,623 1427,723 1433,667 1438,613 1443,582 1448,577 1455,600 1463,618 1467,640 1473,638 1482,630 1488,660 1495,650 1503,667 1508,687 1512,713 1518,687 1527,707 1537,702 1542,727 1550,780 1555,750 1558,735 1572,735 1580,743 1589,763 1595,750 1605,773 1613,787 1618,843 1623,893 1631,937 1635,907 1638,887 1642,893 1647,877 1653,850 1657,833 1665,847 1670,807 1677,773 1682,790 1686,817 1691,800 1695,775 1700,803 1705,820 1710,820 1719,793 1725,803 1731,830 1735,797 1740,738 1745,767 1750,823 1755,890 1761,925 1765,883 1771,850 1775,857 1783,863 1788,883 1793,912 1798,907 1802,890 1808,900 1813,873 1819,853 1823,863 1832,853 1838,827 1847,865 1852,850`
  .split(' ').map(p => p.split(',').map(Number));

// High-low wicks: x, top, bottom.
const wicksUp = '51,650,965 62,700,820 68,559,703 72,700,820 78,650,820 82,660,792 94,960,995 97,880,995 101,822,850 110,792,850 131,850,965 136,733,763 147,617,733 157,617,673 163,617,673 166,617,673 168,617,733 170,617,640 208,733,762 212,820,907 232,880,937 260,763,792 267,792,820 293,790,850 301,733,763 325,559,640 328,559,600 347,383,467 343,470,547 358,355,500 360,325,353 392,417,440 405,417,470 427,442,558 436,355,498 439,325,390 495,355,447 512,383,470 571,470,528 598,383,528 594,413,528 617,413,442 633,383,442 643,383,413 654,325,413 678,238,383 722,297,330 746,325,354 766,413,442 800,355,383 815,325,354 864,383,500 882,237,300 904,267,296 908,267,296 962,121,205 965,121,203 993,150,170 999,237,267 1066,267,395 1064,412,442 1092,440,470 1147,529,558 1173,560,588 1205,560,592 1223,500,528 1432,617,660 1573,740,792 1617,820,937 1674,762,800 1734,762,792 1792,910,937 1818,850,879 1849,865,879 1851,821,850';
const wicksDown = '50,675,792 54,400,700 56,600,820 59,660,850 70,559,733 92,850,995 90,820,907 104,850,907 118,850,907 123,907,995 125,930,965 133,675,790 138,763,878 142,792,878 155,617,673 161,617,673 165,617,703 177,673,762 179,673,762 181,700,792 192,675,792 194,762,850 198,762,850 210,850,907 218,850,907 229,792,937 241,850,937 246,907,937 267,703,750 278,820,850 282,733,850 287,733,850 290,763,850 333,530,587 336,530,587 363,383,498 371,383,413 375,413,470 408,498,518 447,325,442 460,442,470 468,500,528 471,500,528 481,413,498 483,440,498 499,440,498 539,470,528 531,470,500 587,470,528 614,442,470 642,413,442 671,267,295 677,325,354 712,325,354 717,297,354 738,267,354 758,350,383 784,383,442 812,413,442 822,383,413 838,490,558 867,383,413 916,290,354 922,208,267 933,237,296 973,120,180 991,150,180 995,180,208 1013,297,355 1030,383,442 1077,412,442 1087,413,500 1090,442,558 1117,470,500 1121,558,588 1128,529,558 1150,529,588 1152,529,588 1159,529,617 1163,560,617 1165,588,617 1170,560,588 1176,529,558 1194,560,733 1196,588,617 1203,588,617 1221,558,588 1257,560,588 1267,588,617 1280,577,617 1294,577,588 1369,588,617 1395,617,792 1396,675,792 1422,675,762 1424,733,762 1449,588,617 1472,645,675 1508,703,733 1510,703,733 1521,675,733 1531,675,703 1542,733,762 1548,762,792 1555,733,762 1587,763,792 1593,763,792 1597,763,792 1604,792,821 1616,821,907 1624,880,965 1630,930,965 1634,879,907 1641,879,907 1679,792,849 1683,821,849 1699,821,849 1728,821,849 1750,850,907 1752,850,936 1754,850,936 1759,850,936 1789,907,936 1821,850,879 1840,850,879';

// Trailing-stop dots: dot spacing, then the points of one run.
const sarDown = ['39 67,109 72,240 76,317 81,417 90,550 93,600 98,657 103,727 109,778', '3 123,790 130,802', '8 176,616 180,622 190,652 195,670 203,707 210,732 228,762 235,782', '3 210,732 228,762', '3 240,762 250,778', '3 280,673 308,716', '3 362,323 387,363 405,385', '6 405,385 417,415 424,442', '8 452,324 461,345 466,363 473,407', '3 499,353 520,383 540,402', '7 540,402 557,437 563,463', '3 587,412 593,418', '3 623,382 631,389', '3 676,266 677,266', '3 704,236 733,265 758,282', '9 758,282 763,300 767,320 772,342 783,377 798,413', '9 829,323 837,343 843,377 847,397', '4 907,237 917,242 920,253', '11 999,119 1003,130 1009,157 1018,213 1032,290 1042,360 1055,423', '3 1077,266 1085,279', '12 1085,279 1093,323 1102,373 1113,430 1130,497', '3 1150,469 1160,483', '5 1160,483 1173,513 1195,549', '9 1195,549 1199,577', '3 1251,498 1268,520', '7 1268,520 1277,550 1287,585', '3 1325,527 1333,532', '3 1338,527 1356,554', '3 1368,527 1373,532', '3 1376,527 1393,542', '5 1393,542 1396,561', '4 1422,557 1438,587', '3 1471,557 1488,575', '6 1488,575 1508,617 1520,650 1531,673', '5 1539,673 1547,687 1552,702', '3 1573,702 1603,725 1615,745', '13 1617,753 1625,807 1635,872', '3 1679,762 1691,768', '3 1699,762 1732,786', '3 1747,702 1752,715', '11 1752,715 1760,763 1770,807 1781,846', '3 1789,848 1801,858'];
const sarUp = ['3 112,990 122,974', '11 132,990 140,947 150,887 160,817 175,743', '3 236,936 239,933', '8 255,936 267,890 278,845', '4 308,849 317,837', '15 317,837 323,807 332,737 340,667 347,607 352,527 357,487 360,443', '6 426,558 433,540', '12 433,540 440,503 444,477 450,447', '3 474,528 492,503', '7 492,503 497,483', '3 565,558 578,543', '5 578,543 585,525', '5 594,528 607,497 622,470', '3 632,470 655,450', '13 655,450 660,420 667,373 674,340', '3 678,353 697,333', '3 734,354 737,351', '3 800,470 815,455', '5 815,455 828,425', '4 849,558 872,517', '14 872,517 877,487 883,427 890,380 897,333 906,297', '3 922,354 962,306', '7 962,306 967,293 977,263 987,237 998,212', '3 1057,470 1067,465', '7 1067,465 1075,432', '4 1132,587 1148,556', '11 1203,732 1208,720 1215,677 1220,640 1228,603 1237,573 1249,544', '4 1294,640 1310,615 1323,578', '3 1334,587 1336,586', '3 1358,617 1368,608', '5 1398,791 1421,744', '7 1438,762 1443,750 1453,710 1468,676', '3 1531,732 1538,728', '3 1552,791 1573,776', '3 1637,965 1640,963', '6 1640,963 1647,957 1657,933', '10 1657,933 1665,907 1676,854', '3 1692,849 1698,843', '3 1734,849 1738,845', '7 1738,845 1745,820', '3 1782,937 1788,933', '3 1801,936 1833,913 1852,883'];

const NS = 'http://www.w3.org/2000/svg';
function add(parent, cls, d, dash) {
  const p = document.createElementNS(NS, 'path');
  p.setAttribute('class', cls);
  p.setAttribute('d', d);
  if (dash) p.setAttribute('stroke-dasharray', dash);
  parent.appendChild(p);
}

const priceGroup = document.getElementById('price');
const wickPath = list => list.split(' ').map(w => {
  const [x, a, b] = w.split(',');
  return `M${+x + 0.5} ${a}V${b}`;
}).join('');
add(priceGroup, 'wick-down', wickPath(wicksDown));
add(priceGroup, 'wick-up', wickPath(wicksUp));

let slow = price[0][1], up = '', down = '', fastLine = '', slowLine = '', seg = 0;
for (let x = price[0][0]; x <= 1852; x++) {
  while (seg < price.length - 2 && price[seg + 1][0] < x) seg++;
  const [x0, y0] = price[seg], [x1, y1] = price[seg + 1];
  const fast = y0 + (y1 - y0) * (x - x0) / (x1 - x0);
  slow += (fast - slow) * 0.22;
  const quad = `M${x} ${fast.toFixed(1)}V${slow.toFixed(1)}h1V${fast.toFixed(1)}z`;
  if (fast < slow) up += quad; else down += quad;
  fastLine += `${fastLine ? 'L' : 'M'}${x} ${fast.toFixed(1)}`;
  slowLine += `${slowLine ? 'L' : 'M'}${x} ${slow.toFixed(1)}`;
}
add(priceGroup, 'up-fill', up);
add(priceGroup, 'down-fill', down);
add(priceGroup, 'fast', fastLine);
add(priceGroup, 'slow', slowLine);

const sarGroup = document.getElementById('sar');
const run = (cls, text) => {
  const [gap, ...pts] = text.split(' ');
  add(sarGroup, cls, 'M' + pts.join('L'), '0 ' + gap);
};
sarDown.forEach(t => run('sar-down', t));
sarUp.forEach(t => run('sar-up', t));
```
